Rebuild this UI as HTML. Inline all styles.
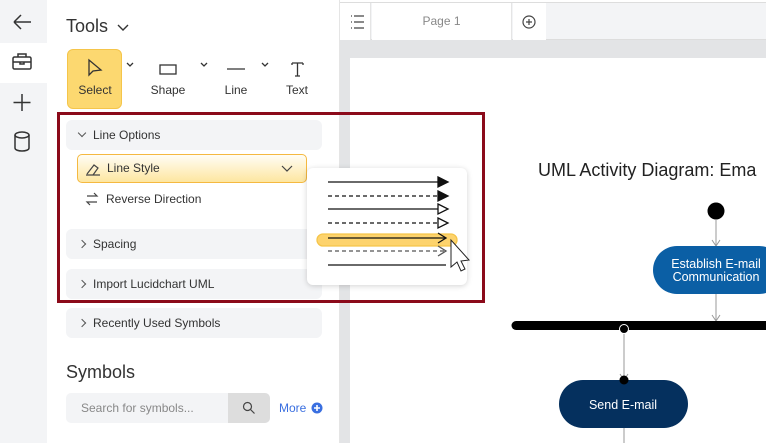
<!DOCTYPE html>
<html><head><style>
*{margin:0;padding:0;box-sizing:border-box}
body{width:766px;height:443px;overflow:hidden;background:#fff;font-family:"Liberation Sans",sans-serif;position:relative;color:#222}
.a{position:absolute}
.sec{position:absolute;left:66px;width:256px;height:30px;background:#f3f4f6;border-radius:6px;font-size:12px;color:#333;line-height:30px;padding-left:27px}
.sec:before{content:"";position:absolute;left:13px;top:12px;width:5px;height:5px;border-right:1px solid #555;border-bottom:1px solid #555;transform:rotate(-45deg)}
.sec.open:before{transform:rotate(45deg);top:10px}
.tl{position:absolute;font-size:12px;color:#333;text-align:center;width:60px}
</style></head><body>
<div class="a" style="left:0;top:0;width:47px;height:443px;background:#f3f4f6"></div>
<div class="a" style="left:0;top:43px;width:47px;height:40px;background:#fff"></div>
<svg class="a" style="left:0;top:0" width="47" height="160" fill="none" stroke="#333" stroke-width="1.5">
<path d="M14 22h17M14 22l7-7M14 22l7 7"/>
<rect x="13" y="57" width="18" height="12" rx="1.5"/><path d="M18 57v-3h8v3M13 62h18M20 62v2h4v-2"/>
<path d="M22 94v17M13.5 102.5h17"/>
<ellipse cx="22" cy="135" rx="7" ry="3"/><path d="M15 135v13c0 2 3.5 3 7 3s7-1 7-3v-13"/>
</svg>
<div class="a" style="left:66px;top:16px;font-size:18px;color:#333">Tools</div>
<svg class="a" style="left:116px;top:22px" width="14" height="10" fill="none" stroke="#333" stroke-width="1.4"><path d="M2 3l5 5 5-5"/></svg>
<div class="a" style="left:67px;top:49px;width:55px;height:60px;background:#fcd870;border:1px solid #f5c54a;border-radius:6px"></div>
<svg class="a" style="left:60px;top:55px" width="260" height="30" fill="none" stroke="#333" stroke-width="1.3">
<path d="M29 5v15l4-4 8-1z"/>
<path d="M67 8l3 3 3-3M141 8l3 3 3-3M202 8l3 3 3-3"/>
<rect x="100" y="10" width="16" height="9"/>
<path d="M167 14h18"/>
<path d="M232 8h11M237.5 8v13M235 21h5M232 8v2M243 8v2"/>
</svg>
<div class="tl" style="left:65px;top:83px">Select</div>
<div class="tl" style="left:138px;top:83px">Shape</div>
<div class="tl" style="left:206px;top:83px">Line</div>
<div class="tl" style="left:267px;top:83px">Text</div>

<div class="sec open" style="top:120px">Line Options</div>
<div class="a" style="left:77px;top:154px;width:230px;height:29px;border:1px solid #f5b940;border-radius:5px;background:linear-gradient(#fffdf5,#fde6a0);font-size:12px;line-height:27px;padding-left:29px;color:#333">Line Style</div>
<svg class="a" style="left:84px;top:160px" width="220" height="18" fill="none" stroke="#444" stroke-width="1.2"><path d="M2 15h14M3 14l7-9 4 3-5 7"/><path d="M198 6l5 5 5-5"/></svg>
<svg class="a" style="left:84px;top:191px" width="16" height="16" fill="none" stroke="#444" stroke-width="1.2"><path d="M3 5h10l-3-3M13 11H3l3 3"/></svg>
<div class="a" style="left:106px;top:192px;font-size:12px;color:#333">Reverse Direction</div>
<div class="sec" style="top:229px">Spacing</div>
<div class="sec" style="top:269px">Import Lucidchart UML</div>
<div class="sec" style="top:308px">Recently Used Symbols</div>
<div class="a" style="left:66px;top:362px;font-size:18px;color:#333">Symbols</div>
<div class="a" style="left:66px;top:393px;width:204px;height:30px;background:#f3f4f6;border-radius:5px;font-size:12px;color:#888;line-height:30px;padding-left:15px">Search for symbols...</div>
<div class="a" style="left:228px;top:393px;width:42px;height:30px;background:#ddd;border-radius:0 5px 5px 0"></div>
<svg class="a" style="left:242px;top:401px" width="14" height="14" fill="none" stroke="#444" stroke-width="1.2"><circle cx="5.5" cy="5.5" r="4"/><path d="M8.5 8.5l4 4"/></svg>
<div class="a" style="left:279px;top:401px;font-size:12px;color:#3a6fe0">More</div>
<svg class="a" style="left:311px;top:402px" width="12" height="12"><circle cx="6" cy="6" r="5.5" fill="#3a6fe0"/><path d="M6 3v6M3 6h6" stroke="#fff" stroke-width="1.6"/></svg>

<div class="a" style="left:339px;top:0;width:1px;height:443px;background:#e5e5e5"></div>
<div class="a" style="left:340px;top:40px;width:426px;height:403px;background:#e3e4e6"></div>
<div class="a" style="left:340px;top:2px;width:426px;height:38px;background:#f3f4f6;border-top:1px solid #ddd;border-bottom:1px solid #ddd"></div>
<div class="a" style="left:340px;top:3px;width:31px;height:37px;background:#fff;border-right:1px solid #e5e5e5"></div>
<div class="a" style="left:372px;top:3px;width:140px;height:37px;background:#fff;border-right:1px solid #e5e5e5;font-size:12px;color:#888;text-align:center;line-height:37px">Page 1</div>
<div class="a" style="left:513px;top:3px;width:33px;height:37px;background:#fff"></div>
<svg class="a" style="left:340px;top:3px" width="210" height="37" fill="none" stroke="#444" stroke-width="1.2">
<path d="M11 13h1M14 13h10M11 19h1M14 19h10M11 25h1M14 25h10"/>
<circle cx="189" cy="19" r="6"/><path d="M189 16v6M186 19h6"/>
</svg>
<div class="a" style="left:350px;top:58px;width:416px;height:385px;background:#fff"></div>
<div class="a" style="left:538px;top:160px;font-size:18px;color:#222;white-space:nowrap">UML Activity Diagram: Ema</div>
<svg class="a" style="left:500px;top:190px" width="266" height="253" fill="none">
<circle cx="216" cy="21" r="8.5" fill="#000"/>
<path d="M216 30v26M212 50l4 6 4-6M216 104v27M212 125l4 6 4-6M124 140v50M120 184l4 6 4-6M124 238v15" stroke="#999" stroke-width="1"/>
<rect x="153" y="56" width="130" height="48" rx="24" fill="#0b5fa5"/>
<path d="M16 135.5h260" stroke="#000" stroke-width="9" stroke-linecap="round"/>
<circle cx="124" cy="139" r="4.5" fill="#000" stroke="#fff" stroke-width="1"/>
<rect x="59" y="190" width="129" height="48" rx="24" fill="#05305e"/>
<circle cx="124" cy="190" r="4.5" fill="#000"/>
<text x="216" y="78" fill="#fff" font-size="12.5" font-family="Liberation Sans" text-anchor="middle">Establish E-mail</text>
<text x="216" y="91" fill="#fff" font-size="12.5" font-family="Liberation Sans" text-anchor="middle">Communication</text>
<text x="123" y="219" fill="#fff" font-size="12.5" font-family="Liberation Sans" text-anchor="middle">Send E-mail</text>
</svg>
<div class="a" style="left:57px;top:112px;width:428px;height:191px;border:3px solid #8b0a1a"></div>
<div class="a" style="left:307px;top:168px;width:160px;height:117px;background:#fff;border-radius:6px;box-shadow:0 1px 6px rgba(0,0,0,.18)"></div>
<svg class="a" style="left:307px;top:168px" width="170" height="120" fill="none" stroke="#111" stroke-width="1.3">
<rect x="10" y="66" width="140" height="12" rx="6" fill="#fdd36d" stroke="#f5c54a"/>
<path d="M21 14h110"/><path d="M131 9l10 5-10 5z" fill="#111"/>
<path d="M21 28h110" stroke-dasharray="4 3"/><path d="M131 23l10 5-10 5z" fill="#111"/>
<path d="M21 41h110"/><path d="M131 36l10 5-10 5z" fill="#fff"/>
<path d="M21 55h110" stroke-dasharray="4 3"/><path d="M131 50l10 5-10 5z" fill="#fff"/>
<path d="M21 70h117M131 65l8 5-8 5"/>
<path d="M21 83h117" stroke="#555" stroke-dasharray="4 3"/><path d="M131 78l8 5-8 5" stroke="#555"/>
<path d="M21 97h118"/>
<path d="M144 72v27l6-5 4 9 4-2-4-8 8-1z" fill="#fff" stroke="#222" stroke-width="1"/>
</svg>
</body></html>
